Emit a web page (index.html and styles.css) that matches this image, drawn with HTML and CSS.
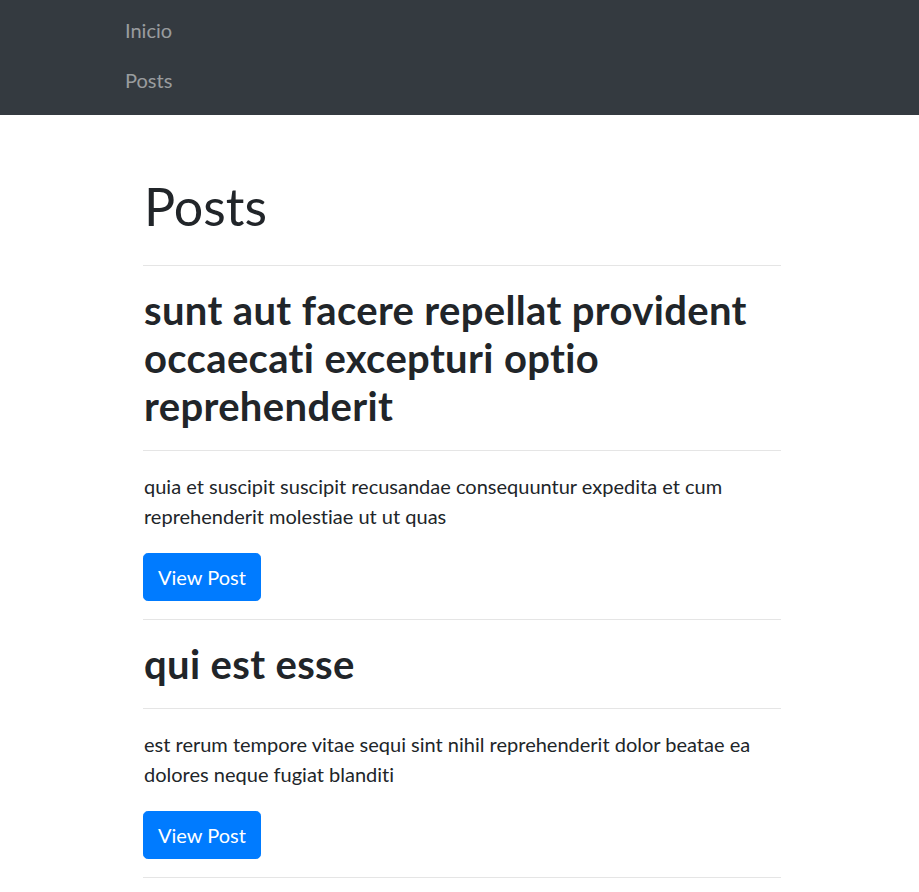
FILE: index.html
```html
<!DOCTYPE html>
<html lang="es">
<head>
<meta charset="utf-8">
<title>Posts</title>
<link rel="stylesheet" href="styles.css">
</head>
<body>
<nav class="navbar">
  <ul class="nav-list">
    <li><a class="nav-link" href="#">Inicio</a></li>
    <li><a class="nav-link" href="#">Posts</a></li>
  </ul>
</nav>
<main class="content">
  <h1 class="page-title">Posts</h1>
  <hr class="divider">
  <article class="post">
    <h2 class="post-title">sunt aut facere repellat provident occaecati excepturi optio reprehenderit</h2>
    <hr class="divider">
    <p class="post-body">quia et suscipit suscipit recusandae consequuntur expedita et cum reprehenderit molestiae ut ut quas</p>
    <a class="btn" href="#">View Post</a>
    <hr class="divider divider-end">
  </article>
  <article class="post">
    <h2 class="post-title">qui est esse</h2>
    <hr class="divider">
    <p class="post-body">est rerum tempore vitae sequi sint nihil reprehenderit dolor beatae ea dolores neque fugiat blanditi</p>
    <a class="btn" href="#">View Post</a>
    <hr class="divider divider-end">
  </article>
</main>
</body>
</html>
```
FILE: styles.css
```css
* { box-sizing: border-box; }
html, body { margin: 0; padding: 0; }
body {
  font-family: Lato, "Liberation Sans", sans-serif;
  font-variant-ligatures: none;
  color: #212529;
  background: #fff;
}
.navbar {
  background: #343a40;
  padding: 5px 0 10px 125px;
}
.nav-list {
  list-style: none;
  margin: 0;
  padding: 0;
  display: flex;
  flex-direction: column;
}
.nav-link {
  display: block;
  padding: 10px 0;
  font-size: 20px;
  line-height: 30px;
  color: rgba(255, 255, 255, 0.5);
  text-decoration: none;
}
.content {
  width: 638px;
  margin-left: 143px;
  padding-top: 60px;
}
.page-title {
  margin: 0 0 28px 1px;
  font-size: 52px;
  line-height: 1.2;
  font-weight: 400;
}
.divider {
  margin: 20px 0;
  border: 0;
  border-top: 1px solid rgba(0, 0, 0, 0.1);
}
.divider-end {
  margin-top: 18px;
}
.post-title {
  margin: 0 0 0 1px;
  font-size: 40px;
  line-height: 48px;
  font-weight: 700;
  letter-spacing: 0.35px;
}
.post-body {
  margin: 0 0 22px 1px;
  font-size: 20px;
  line-height: 30px;
}
.btn {
  display: inline-block;
  padding: 8px 14px;
  font-size: 20px;
  line-height: 30px;
  color: #fff;
  background: #007bff;
  border: 1px solid #007bff;
  border-radius: 4.8px;
  text-decoration: none;
}
```
